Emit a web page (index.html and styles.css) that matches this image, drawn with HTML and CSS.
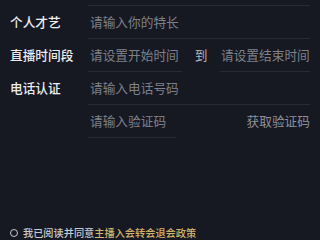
FILE: index.html
```html
<!DOCTYPE html>
<html lang="zh">
<head>
<meta charset="utf-8">
<link rel="stylesheet" href="styles.css">
</head>
<body>
<div class="page">
  <div class="form">
    <div class="row top">
      <div class="label"></div>
      <div class="field line"></div>
    </div>
    <div class="row">
      <div class="label">个人才艺</div>
      <div class="field line"><span class="ph">请输入你的特长</span></div>
    </div>
    <div class="row">
      <div class="label">直播时间段</div>
      <div class="field range">
        <div class="line start"><span class="ph">请设置开始时间</span></div>
        <span class="to">到</span>
        <div class="line end"><span class="ph">请设置结束时间</span></div>
      </div>
    </div>
    <div class="row">
      <div class="label">电话认证</div>
      <div class="field line"><span class="ph">请输入电话号码</span></div>
    </div>
    <div class="row">
      <div class="label"></div>
      <div class="field code">
        <div class="line codein"><span class="ph">请输入验证码</span></div>
        <span class="getcode">获取验证码</span>
      </div>
    </div>
  </div>
  <div class="footer">
    <span class="radio"></span>
    <span class="agree">我已阅读并同意</span><span class="policy">主播入会转会退会政策</span>
  </div>
</div>
</body>
</html>
```

FILE: styles.css
```css
* { box-sizing: border-box; }
html, body {
  margin: 0;
  padding: 0;
  background: #161822;
}
body {
  width: 320px;
  height: 240px;
  overflow: hidden;
  font-family: "Noto Sans CJK SC", "Noto Sans", sans-serif;
}
.page {
  height: 240px;
  display: flex;
  flex-direction: column;
}
.form {
  display: flex;
  flex-direction: column;
}
.row {
  display: flex;
  height: 33px;
  padding-right: 10px;
}
.row.top {
  height: 6px;
}
.label {
  width: 88px;
  padding-left: 10px;
  color: #ececf0;
  font-size: 12.7px;
  font-weight: 500;
  line-height: 32px;
}
.field {
  flex: 1;
  display: flex;
  align-items: stretch;
}
.line {
  border-bottom: 1px solid #272a35;
}
.ph {
  color: #7f818a;
  font-size: 12.7px;
  line-height: 32px;
  padding-left: 2px;
}
.range .start {
  width: 94px;
}
.range .to {
  width: 38px;
  text-align: center;
  color: #b4b6bd;
  font-size: 12.7px;
  line-height: 32px;
}
.range .end {
  flex: 1;
}
.range .end .ph {
  padding-left: 1px;
}
.code {
  justify-content: space-between;
}
.code .codein {
  width: 88px;
}
.getcode {
  color: #8f919a;
  font-size: 12.7px;
  line-height: 32px;
}
.footer {
  margin-top: auto;
  display: flex;
  align-items: center;
  height: 14px;
  padding-left: 10px;
  font-size: 10.2px;
  font-weight: 500;
  line-height: 14px;
}
.radio {
  width: 8px;
  height: 8px;
  border: 1px solid #c9cad0;
  border-radius: 50%;
  margin-right: 5px;
}
.agree {
  color: #c9cad0;
}
.policy {
  color: #d4b46a;
}
```
